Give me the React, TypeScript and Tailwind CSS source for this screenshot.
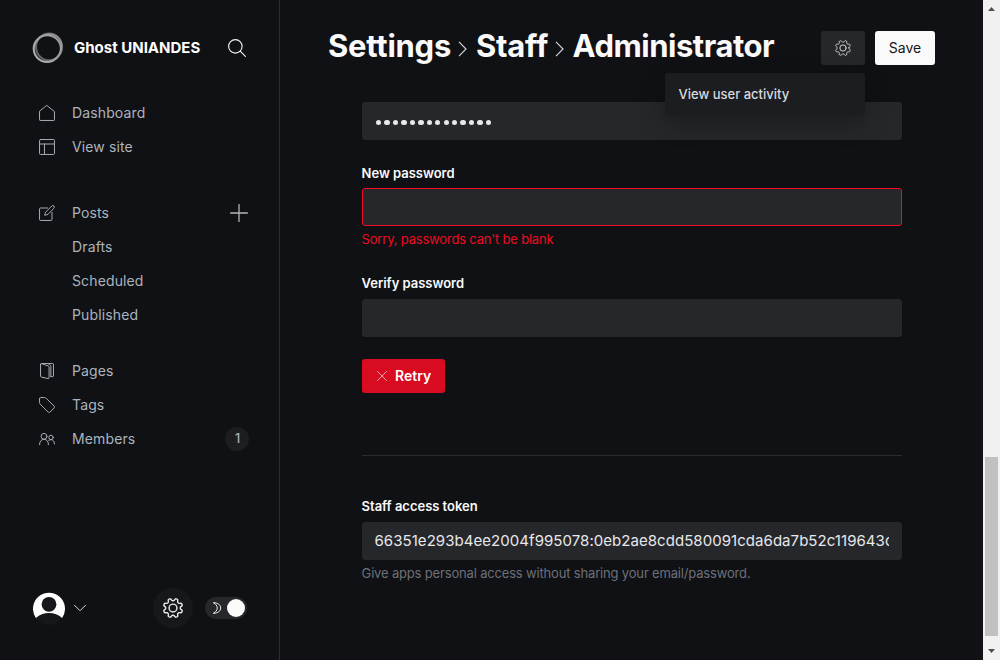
import type { ReactNode } from "react";

function Svg({ size = 16, sw = 1.5, className = "", children }: { size?: number; sw?: number; className?: string; children: ReactNode }) {
  return (
    <svg width={size} height={size} viewBox="0 0 24 24" fill="none" stroke="currentColor" strokeWidth={sw} strokeLinecap="round" strokeLinejoin="round" className={"shrink-0 " + className}>
      {children}
    </svg>
  );
}

// Outline of an eight-toothed cog with rounded teeth, notches on the axes.
const GEAR =
  Array.from({ length: 144 }, (_, i) => {
    const a = (i / 144) * Math.PI * 2;
    const r = 10.2 - 1.5 * Math.tanh(1.8 * Math.cos(8 * a));
    return `${i ? "L" : "M"}${(12 + r * Math.cos(a)).toFixed(2)} ${(12 + r * Math.sin(a)).toFixed(2)}`;
  }).join("") + "z";

function Gear({ size, sw }: { size: number; sw: number }) {
  return (
    <Svg size={size} sw={sw}>
      <path d={GEAR} />
      <circle cx="12" cy="12" r="4.7" />
    </Svg>
  );
}

function NavItem({ icon, label, children }: { icon?: ReactNode; label: string; children?: ReactNode }) {
  return (
    <li className="flex h-[34px] items-center pl-[39px] pr-[30px] text-[14px] tracking-[0.13px] text-[#abb4be]">
      <span className="flex w-[33px] shrink-0 items-center text-[#a9acb1]">{icon}</span>
      <span className="flex-1 pb-[2px]">{label}</span>
      {children}
    </li>
  );
}

function Sidebar() {
  return (
    <nav className="flex w-[280px] shrink-0 flex-col border-r border-[#2b2d31]">
      <div className="flex h-[96px] items-center pl-8 pr-[33px]">
        <svg width="32" height="32" viewBox="0 0 32 32" fill="none" className="shrink-0">
          <ellipse cx="15.2" cy="16.6" rx="13.6" ry="13.4" stroke="#a0a0a0" strokeWidth="1.9" />
          <ellipse cx="17" cy="15" rx="13" ry="13.4" stroke="#777" strokeOpacity=".8" strokeWidth="2.2" />
          <ellipse cx="16" cy="15.8" rx="14.6" ry="13" transform="rotate(-45 16 16)" stroke="#c0c0c0" strokeOpacity=".55" strokeWidth="1.8" />
        </svg>
        <span className="ml-[10px] flex-1 whitespace-nowrap text-[15px] font-bold text-white">Ghost UNIANDES</span>
        <Svg size={18} sw={1.5} className="text-[#f4f5f6]">
          <circle cx="9.8" cy="9.8" r="9" />
          <path d="M16.3 16.3 23.2 23.2" />
        </Svg>
      </div>
      <ul>
        <NavItem label="Dashboard" icon={<Svg><path d="M.8 9.8v12.4c0 .6.4 1 1 1h20.4c.6 0 1-.4 1-1V9.8L12 .9z" /></Svg>} />
        <NavItem label="View site" icon={<Svg><rect x=".8" y=".8" width="22.4" height="22.4" rx="1.5" /><path d="M.8 7.5h22.4M8.2 7.5v15.7" /></Svg>} />
      </ul>
      <ul className="mt-8">
        <NavItem label="Posts" icon={<Svg><path d="M13 4.5H2.3c-.8 0-1.5.7-1.5 1.5v15.7c0 .8.7 1.5 1.5 1.5H18c.8 0 1.5-.7 1.5-1.5V11" /><path d="m13.1 14.2-4.6 1.3 1.3-4.6L19.2 1.5a2.1 2.1 0 0 1 3.2 3.2z" /></Svg>}>
          <Svg size={18} sw={1.7} className="mr-px text-[#b5b7ba]"><path d="M12 .8v22.4M.8 12h22.4" /></Svg>
        </NavItem>
        <NavItem label="Drafts" />
        <NavItem label="Scheduled" />
        <NavItem label="Published" />
      </ul>
      <ul className="mt-[22px]">
        <NavItem label="Pages" icon={<Svg><path d="M2.3 2v17.6c0 .7.4 1.2 1 1.400l10.300 2.400c.8.2 1.500-.3 1.500-1V6c0-.7-.4-1.300-1.100-1.500L3.800.9C3 .7 2.300 1.200 2.300 2zM3.500.8h17.200c.6 0 1 .4 1 1v17.600c0 .6-.4 1-1 1h-2.400M13.500 1c2.300.7 3.600 1.600 4.300 4v15.400" /></Svg>} />
        <NavItem label="Tags" icon={<Svg><path d="M.8 2.3v6.1c0 .8.3 1.6.9 2.2l12 12c.8.8 2 .8 2.800 0l6.100-6.100c.8-.8.8-2 0-2.800l-12-12C10 1 9.200.8 8.400.8H2.300C1.500.8.8 1.500.8 2.300z" /></Svg>} />
        <NavItem label="Members" icon={<Svg><circle cx="7.500" cy="8" r="4.400" /><path d="M.8 20.500c0-4.800 2.600-8 6.700-8s6.700 3.200 6.700 8" /><circle cx="18" cy="9.700" r="3.300" /><path d="M14.500 14.200c1-.8 2.200-1.200 3.500-1.200 3.200 0 5.200 2.600 5.200 6.500" /></Svg>}>
          <span className="flex size-6 items-center justify-center rounded-full bg-[#1d1e22] pl-px text-[12.5px] font-medium tracking-normal">1</span>
        </NavItem>
      </ul>
      <div className="mb-8 mt-auto flex h-10 items-center pl-[33px] pr-8">
        <svg width="32" height="33" viewBox="0 0 32 33" className="shrink-0">
          <circle cx="16" cy="17" r="16" fill="#15171a" />
          <path d="M2.900 26A16 16 0 1 1 29.100 26C25.500 22.800 21 21 16 21S6.500 22.800 2.900 26z" fill="#fff" />
          <circle cx="16" cy="12.300" r="7.400" fill="#15171a" />
        </svg>
        <Svg size={12} sw={2} className="ml-[9px] text-[#d5d7da]"><path d="M1 6.500 12 17.500 23 6.500" /></Svg>
        <span className="ml-auto flex size-10 items-center justify-center rounded-full bg-[#17181b] text-[#e8e9eb]"><Gear size={20} sw={1.700} /></span>
        <span className="ml-3 flex h-[22px] w-[42px] items-center justify-between rounded-full bg-[#26272b] pl-[7px] pr-[2px] text-[#e8e9eb]">
          <svg width="10" height="12" viewBox="0 0 10 12" fill="none" stroke="currentColor"><path d="M1.300.7c5 0 7.300 2.300 7.300 5.300s-2.300 5.300-7.300 5.300C4 10 5.200 8.200 5.200 6S4 2 1.300.7z" /></svg>
          <span className="size-[18px] rounded-full bg-[#fafafa]" />
        </span>
      </div>
    </nav>
  );
}

function Chevron() {
  return (
    <svg width="9" height="16" viewBox="0 0 9 16" fill="none" stroke="#d0d2d5" strokeWidth="1.2" className="mt-1.5 shrink-0"><path d="m1 .8 7 7.2-7 7.2" /></svg>
  );
}

function Field({ label, error, children }: { label?: string; error?: boolean; children?: ReactNode }) {
  return (
    <div>
      {label && <div className={"-ml-[0.4px] h-5 text-[13px] font-semibold leading-5 tracking-[-0.02px] text-[#fafafa] " + (error ? "mb-[5px]" : "mb-[6px]")}>{label}</div>}
      <div className={"flex h-[38px] items-center rounded-[3px] border bg-[#26272b] px-3 text-[15px] text-[#e6e8eb] " + (error ? "border-[#f50b23]" : "border-[#26272b]")}>
        {children}
      </div>
    </div>
  );
}

export default function App() {
  return (
    <div className="flex h-[660px] w-[1000px] overflow-hidden bg-[#101114] font-['Inter',sans-serif]">
      <Sidebar />
      <main className="flex min-w-0 flex-1 flex-col">
        <header className="flex h-[96px] shrink-0 items-center pl-12 pr-12">
          <h1 className="flex flex-1 items-center whitespace-nowrap pb-1 text-[31px] font-bold leading-10 tracking-[-0.25px] text-[#fafafa]">
            <span>Settings</span>
            <span className="ml-[7px] mr-[9px] flex"><Chevron /></span>
            <span>Staff</span>
            <span className="ml-[7px] mr-[8.5px] flex"><Chevron /></span>
            <span className="tracking-[-0.48px]">Administrator</span>
          </h1>
          <div className="relative mr-[10px]">
            <button className="flex h-[34px] w-11 items-center justify-center rounded-[3px] bg-[#26272b] text-[#d0d2d5]"><Gear size={16} sw={1.5} /></button>
            <div className="absolute right-0 top-[42px] flex h-[42px] w-[200px] items-center rounded-[3px] bg-[#1c1d21] pl-[13.6px] pt-[2px] text-[13px] font-medium text-[#d8dadd] shadow-[0_8px_24px_rgba(0,0,0,0.3)]">View user activity</div>
          </div>
          <button className="h-[34px] w-[60px] rounded-[3px] bg-[#fafafa] pb-[2px] text-[14px] text-[#15171a]">Save</button>
        </header>
        <div className="ml-[82px] w-[540px] pt-[6px]">
          <Field>
            <span className="flex gap-[3.1px] pl-[1px] pt-[3px]">
              {Array.from({ length: 14 }, (_, i) => <span key={i} className="size-[5.35px] rounded-full bg-[#e6e8eb]" />)}
            </span>
          </Field>
          <div className="mt-[23px]"><Field label="New password" error /></div>
          <p className="-ml-[0.4px] mt-[3px] h-5 text-[13px] leading-5 tracking-[-0.19px] text-[#ee0b22]">Sorry, passwords can't be blank</p>
          <div className="mt-6"><Field label="Verify password" /></div>
          <button className="mt-[22px] flex h-[34px] w-[83px] items-center rounded-[3px] bg-[#d90b20] pl-[15px] text-[14px] font-semibold text-white">
            <Svg size={10} sw={2.4} className="mr-2 text-[#f5a0a8]"><path d="m1 1 22 22M23 1 1 23" /></Svg>
            <span className="pb-[2px]">Retry</span>
          </button>
          <hr className="mt-[62px] border-[#292b2f]" />
          <div className="mt-10">
            <Field label="Staff access token">
              <span className="-ml-[0.5px] overflow-hidden whitespace-nowrap tracking-[0.05px]">66351e293b4ee2004f995078:0eb2ae8cdd580091cda6da7b52c119643c</span>
            </Field>
          </div>
          <p className="-ml-[0.4px] mt-[3px] h-5 text-[13px] leading-5 tracking-[-0.17px] text-[#6b7079]">Give apps personal access without sharing your email/password.</p>
        </div>
      </main>
      <div className="flex w-[17px] shrink-0 flex-col items-center bg-[#f1f1f1]">
        <svg width="17" height="17" viewBox="0 0 17 17" fill="#505050"><path d="M5 11h7L8.5 7z" /></svg>
        <div className="mt-[440px] h-[179px] w-[13px] bg-[#c1c1c1]" />
        <svg width="17" height="17" viewBox="0 0 17 17" fill="#505050" className="mt-auto"><path d="M5 6h7l-3.5 4z" /></svg>
      </div>
    </div>
  );
}
